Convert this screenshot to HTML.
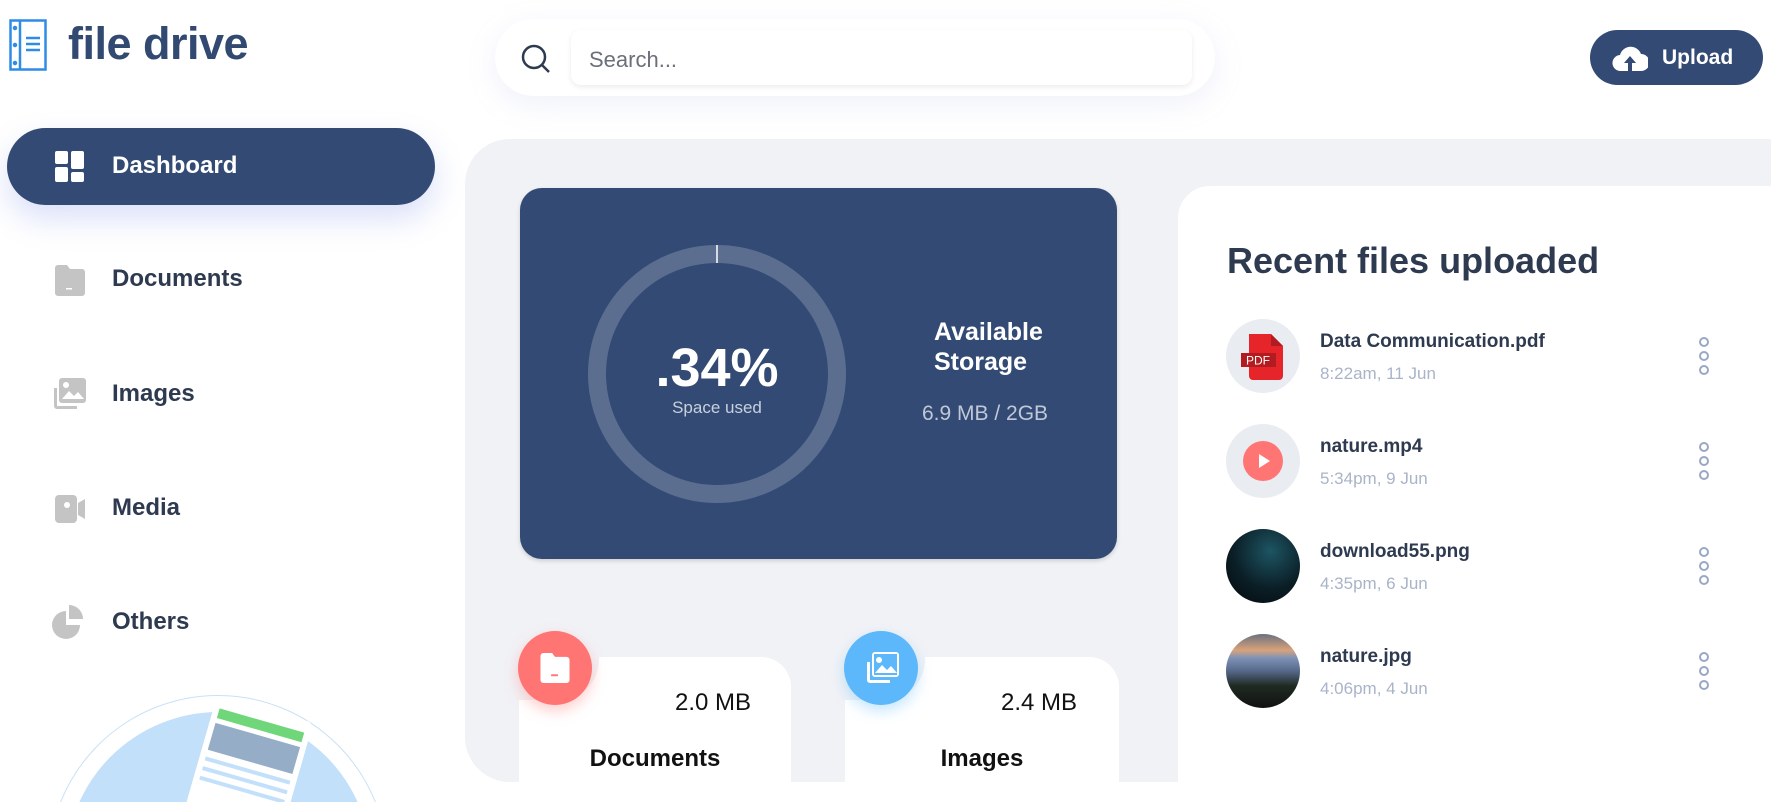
<!DOCTYPE html>
<html><head><meta charset="utf-8"><style>
*{margin:0;padding:0;box-sizing:border-box}
html,body{width:1771px;height:802px;overflow:hidden}
body{background:#fff;font-family:"Liberation Sans",sans-serif;position:relative;color:#2e3a4f}
.abs{position:absolute}
.logo-t{left:68px;top:18px;font-size:45px;font-weight:bold;color:#324a72;letter-spacing:-0.5px}
.search{left:495px;top:19px;width:720px;height:77px;border-radius:40px;background:#fff;box-shadow:0 8px 30px rgba(150,160,220,0.15)}
.input{left:571px;top:30px;width:621px;height:55px;border-radius:10px;background:#fff;box-shadow:0 2px 6px rgba(0,0,0,0.08);font-size:22px;color:#6b6f78;padding:17px 18px}
.upload{left:1590px;top:30px;width:173px;height:55px;border-radius:28px;background:#334b74;color:#fff;font-weight:bold;font-size:21px}
.dash{left:7px;top:128px;width:428px;height:77px;border-radius:40px;background:#334b74;box-shadow:0 14px 30px rgba(110,130,230,0.25)}
.nav{left:112px;font-size:24px;font-weight:bold;color:#2e3a4f}
.panel{left:465px;top:139px;width:1306px;height:643px;background:#f1f2f6;border-radius:45px 0 0 45px}
.blue{left:520px;top:188px;width:597px;height:371px;border-radius:22px;background:#334b74;box-shadow:0 2px 4px rgba(0,0,0,0.15)}
.card{background:#fff;border-radius:40px 30px 0 0}
.right{left:1178px;top:186px;width:593px;height:596px;background:#fff;border-radius:32px 0 0 0}
.name{left:1320px;font-size:19px;font-weight:bold;color:#2e3a4f}
.time{left:1320px;font-size:17px;color:#a9b4c8}
.ic{left:1226px;width:74px;height:74px;border-radius:50%;background:#e9ecf1}
.dots{left:1699px;width:11px}
.dots i{display:block;width:10px;height:10px;border:2px solid #9aa8c4;border-radius:50%;margin-bottom:4px}
.clip{left:0;top:680px;width:460px;height:122px;overflow:hidden}
</style></head><body>
<svg class="abs" style="left:9px;top:19px" width="38" height="52" viewBox="0 0 38 52" fill="none" stroke="#2f8ce6" stroke-width="2.5"><rect x="1.5" y="1.5" width="35" height="49"/><line x1="11" y1="2" x2="11" y2="50"/><line x1="17" y1="19" x2="31" y2="19"/><line x1="17" y1="25" x2="31" y2="25"/><line x1="17" y1="31" x2="31" y2="31"/><circle cx="6" cy="9" r="1" fill="#2f8ce6"/><circle cx="6" cy="26" r="1" fill="#2f8ce6"/><circle cx="6" cy="44" r="1" fill="#2f8ce6"/></svg>
<div class="abs logo-t">file drive</div>
<div class="abs search"></div>
<svg class="abs" style="left:520px;top:43px" width="32" height="32" viewBox="0 0 32 32" fill="none" stroke="#2e3a4f" stroke-width="2.5"><circle cx="14" cy="14" r="11"/><line x1="22" y1="22" x2="29" y2="29"/></svg>
<div class="abs input">Search...</div>
<div class="abs upload"><svg class="abs" style="left:22px;top:14px" width="36" height="28" viewBox="0 0 36 28"><path d="M9 27a8 8 0 0 1-1-16A11 11 0 0 1 29 10a8 8 0 0 1 0 17z" fill="#fff"/><path d="M18 12l-6 7h4v8h4v-8h4z" fill="#334b74"/></svg><span class="abs" style="left:72px;top:16px">Upload</span></div>
<div class="abs dash"></div>
<svg class="abs" style="left:55px;top:151px" width="30" height="31" viewBox="0 0 30 31" fill="#fff"><rect x="0" y="0" width="13" height="13" rx="2"/><rect x="0" y="16" width="13" height="15" rx="2"/><rect x="16" y="0" width="13" height="18" rx="2"/><rect x="16" y="21" width="13" height="10" rx="2"/></svg>
<div class="abs nav" style="top:152px;color:#fff">Dashboard</div>
<svg class="abs" style="left:55px;top:265px" width="30" height="31" viewBox="0 0 30 31"><path d="M3 0h9l3 4h12a3 3 0 0 1 3 3v21a3 3 0 0 1-3 3H3a3 3 0 0 1-3-3V3a3 3 0 0 1 3-3z" fill="#c4c4c4"/><rect x="11" y="23" width="6" height="1.5" fill="#fff"/></svg>
<div class="abs nav" style="top:265px">Documents</div>
<svg class="abs" style="left:52px;top:378px" width="34" height="32" viewBox="0 0 34 32"><path d="M2 10v18a3 3 0 0 0 3 3h20v-3H5V10z" fill="#c4c4c4"/><rect x="7" y="0" width="27" height="25" rx="3" fill="#c4c4c4"/><circle cx="14" cy="7" r="3" fill="#fff"/><path d="M10 21l7-8 5 5 4-4 6 7z" fill="#fff"/></svg>
<div class="abs nav" style="top:380px">Images</div>
<svg class="abs" style="left:55px;top:495px" width="30" height="28" viewBox="0 0 30 28"><rect x="0" y="0" width="22" height="28" rx="4" fill="#c4c4c4"/><path d="M23 8l7-4v20l-7-4z" fill="#c4c4c4"/><circle cx="12" cy="10" r="3" fill="#fff"/></svg>
<div class="abs nav" style="top:494px">Media</div>
<svg class="abs" style="left:52px;top:605px" width="34" height="34" viewBox="0 0 34 34" fill="#c4c4c4"><path d="M14 6a14 14 0 1 0 14 14H14z"/><path d="M18 2a14 14 0 0 1 14 14H18z" transform="translate(-1 -2)"/></svg>
<div class="abs nav" style="top:608px">Others</div>
<div class="abs clip">
<div class="abs" style="left:48px;top:15px;width:340px;height:340px;border-radius:50%;border:1.5px solid #c9e1f7"></div>
<div class="abs" style="left:66px;top:32px;width:305px;height:305px;border-radius:50%;background:#c3e0fa"></div>
<svg class="abs" style="left:180px;top:20px" width="150" height="102" viewBox="0 0 150 102"><g transform="rotate(16 80 20)"><rect x="32" y="8" width="100" height="140" rx="6" fill="#fff"/><rect x="38" y="20" width="88" height="10" fill="#6fd67a"/><rect x="38" y="35" width="88" height="28" fill="#96adc8"/><rect x="38" y="70" width="88" height="4" fill="#c3e0fa"/><rect x="38" y="80" width="88" height="4" fill="#c3e0fa"/><rect x="38" y="90" width="88" height="4" fill="#c3e0fa"/></g></svg>
</div>
<div class="abs panel"></div>
<div class="abs blue"></div>
<svg class="abs" style="left:587px;top:244px" width="260" height="260" viewBox="0 0 260 260"><circle cx="130" cy="130" r="120" fill="none" stroke="#5b6e90" stroke-width="18"/><line x1="130" y1="1" x2="130" y2="19" stroke="#fff" stroke-width="1.5"/></svg>
<div class="abs" style="left:617px;top:337px;width:200px;text-align:center;color:#fff;font-size:54px;font-weight:bold">.34%</div>
<div class="abs" style="left:617px;top:398px;width:200px;text-align:center;color:#c8d0de;font-size:17px">Space used</div>
<div class="abs" style="left:934px;top:317px;color:#fff;font-size:25px;font-weight:bold;line-height:30px">Available<br>Storage</div>
<div class="abs" style="left:922px;top:402px;color:#c0c8d8;font-size:21px">6.9 MB / 2GB</div>
<div class="abs card" style="left:519px;top:657px;width:272px;height:125px"></div>
<div class="abs" style="left:519px;top:630px;width:80px;height:70px;background:#f1f2f6;border-radius:0 0 40px 0"></div>
<div class="abs" style="left:518px;top:631px;width:74px;height:74px;border-radius:50%;background:#ff7574;box-shadow:0 6px 14px rgba(255,117,116,0.35)"></div>
<svg class="abs" style="left:540px;top:653px" width="30" height="30" viewBox="0 0 30 31"><path d="M3 0h9l3 4h12a3 3 0 0 1 3 3v21a3 3 0 0 1-3 3H3a3 3 0 0 1-3-3V3a3 3 0 0 1 3-3z" fill="#fff"/><rect x="11" y="22" width="7" height="2" fill="#ff7574"/></svg>
<div class="abs" style="left:675px;top:689px;font-size:24px;color:#111">2.0 MB</div>
<div class="abs" style="left:555px;top:745px;width:200px;text-align:center;font-size:24px;font-weight:bold;color:#111">Documents</div>
<div class="abs card" style="left:845px;top:657px;width:274px;height:125px"></div>
<div class="abs" style="left:845px;top:630px;width:80px;height:70px;background:#f1f2f6;border-radius:0 0 40px 0"></div>
<div class="abs" style="left:844px;top:631px;width:74px;height:74px;border-radius:50%;background:#5cb8fb;box-shadow:0 6px 14px rgba(92,184,251,0.35)"></div>
<svg class="abs" style="left:864px;top:652px" width="36" height="32" viewBox="0 0 34 32"><path d="M2 10v18a3 3 0 0 0 3 3h20v-3H5V10z" fill="#fff"/><rect x="7" y="0" width="27" height="25" rx="3" fill="#fff"/><rect x="9" y="2" width="23" height="21" fill="#5cb8fb"/><circle cx="14" cy="8" r="3" fill="#fff"/><path d="M10 21l7-8 5 5 4-4 6 7z" fill="#fff"/></svg>
<div class="abs" style="left:1001px;top:689px;font-size:24px;color:#111">2.4 MB</div>
<div class="abs" style="left:882px;top:745px;width:200px;text-align:center;font-size:24px;font-weight:bold;color:#111">Images</div>
<div class="abs right"></div>
<div class="abs" style="left:1227px;top:240px;font-size:36px;font-weight:bold;color:#2e3a4f">Recent files uploaded</div>
<div class="abs ic" style="top:319px"></div>
<svg class="abs" style="left:1241px;top:334px" width="44" height="46" viewBox="0 0 44 46"><path d="M8 0h22l12 12v30a4 4 0 0 1-4 4H12a4 4 0 0 1-4-4z" fill="#e5252a"/><path d="M30 0v12h12z" fill="#b21c20"/><rect x="0" y="19" width="35" height="14" fill="#b21c20"/><text x="5" y="30.5" font-size="12" fill="#fff" font-family="Liberation Sans">PDF</text></svg>
<div class="abs name" style="top:331px">Data Communication.pdf</div>
<div class="abs time" style="top:364px">8:22am, 11 Jun</div>
<div class="abs dots" style="top:337px"><i></i><i></i><i></i></div>
<div class="abs ic" style="top:424px"></div>
<svg class="abs" style="left:1243px;top:441px" width="40" height="40" viewBox="0 0 40 40"><circle cx="20" cy="20" r="20" fill="#ff7574"/><path d="M16 13l11 7-11 7z" fill="#fff"/></svg>
<div class="abs name" style="top:436px">nature.mp4</div>
<div class="abs time" style="top:469px">5:34pm, 9 Jun</div>
<div class="abs dots" style="top:442px"><i></i><i></i><i></i></div>
<div class="abs ic" style="top:529px;background:radial-gradient(circle at 60% 30%,#1d5563,#0b1e26 55%,#04090c)"></div>
<div class="abs name" style="top:541px">download55.png</div>
<div class="abs time" style="top:574px">4:35pm, 6 Jun</div>
<div class="abs dots" style="top:547px"><i></i><i></i><i></i></div>
<div class="abs ic" style="top:634px;background:linear-gradient(#6a7280 0%,#d9a27a 22%,#7f93b6 32%,#56688a 50%,#1f2a22 70%,#111 100%)"></div>
<div class="abs name" style="top:646px">nature.jpg</div>
<div class="abs time" style="top:679px">4:06pm, 4 Jun</div>
<div class="abs dots" style="top:652px"><i></i><i></i><i></i></div>
</body></html>
